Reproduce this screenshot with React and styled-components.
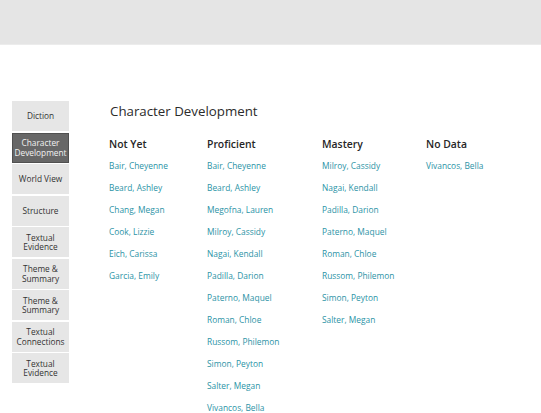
import React from "react";
import styled, { createGlobalStyle } from "styled-components";

const Global = createGlobalStyle`
  html, body { margin: 0; padding: 0; background: #fff; }
  body { font-family: "Open Sans", "Liberation Sans", sans-serif; }
`;

const Header = styled.header`
  height: 44px;
  background: #e5e5e5;
  border-bottom: 1px solid #ececec;
`;

const Body = styled.div`
  display: flex;
  align-items: flex-start;
  padding: 56px 0 0 12px;
`;

const Sidebar = styled.nav`
  display: flex;
  flex-direction: column;
  gap: 1.5px;
  width: 57px;
`;

const NavButton = styled.div`
  box-sizing: border-box;
  height: 30px;
  display: flex;
  align-items: center;
  justify-content: center;
  text-align: center;
  font-size: 8.3px;
  line-height: 9.5px;
  color: ${(p) => (p.$active ? "#f2f2f2" : "#333")};
  background: ${(p) => (p.$active ? "#676767" : "#e6e6e6")};
  border: 1px solid ${(p) => (p.$active ? "#505050" : "#e6e6e6")};
`;

const Main = styled.main`
  margin-left: 40px;
`;

const Title = styled.h1`
  margin: 0 0 0 1px;
  font-size: 13.3px;
  font-weight: 400;
  line-height: 20px;
  color: #2b2b2b;
`;

const Columns = styled.div`
  display: grid;
  grid-template-columns: 98px 115px 104px auto;
  margin-top: 16px;
`;

const Column = styled.div`
  display: flex;
  flex-direction: column;
`;

const ColHead = styled.div`
  font-size: 10.4px;
  font-weight: 600;
  line-height: 14px;
  color: #262626;
  margin-bottom: 4px;
`;

const Name = styled.a`
  font-size: 8.4px;
  line-height: 22px;
  color: #2b93a6;
  text-decoration: none;
  white-space: nowrap;
`;

const nav = [
  ["Diction"],
  ["Character", "Development"],
  ["World View"],
  ["Structure"],
  ["Textual", "Evidence"],
  ["Theme &", "Summary"],
  ["Theme &", "Summary"],
  ["Textual", "Connections"],
  ["Textual", "Evidence"],
];

const columns = [
  {
    title: "Not Yet",
    names: ["Bair, Cheyenne", "Beard, Ashley", "Chang, Megan", "Cook, Lizzie", "Eich, Carissa", "Garcia, Emily"],
  },
  {
    title: "Proficient",
    names: [
      "Bair, Cheyenne",
      "Beard, Ashley",
      "Megofna, Lauren",
      "Milroy, Cassidy",
      "Nagai, Kendall",
      "Padilla, Darion",
      "Paterno, Maquel",
      "Roman, Chloe",
      "Russom, Philemon",
      "Simon, Peyton",
      "Salter, Megan",
      "Vivancos, Bella",
    ],
  },
  {
    title: "Mastery",
    names: [
      "Milroy, Cassidy",
      "Nagai, Kendall",
      "Padilla, Darion",
      "Paterno, Maquel",
      "Roman, Chloe",
      "Russom, Philemon",
      "Simon, Peyton",
      "Salter, Megan",
    ],
  },
  { title: "No Data", names: ["Vivancos, Bella"] },
];

export default function App() {
  return (
    <>
      <Global />
      <Header />
      <Body>
        <Sidebar>
          {nav.map((lines, i) => (
            <NavButton key={i} $active={i === 1}>
              <span>
                {lines.map((l, j) => (
                  <React.Fragment key={j}>
                    {j > 0 && <br />}
                    {l}
                  </React.Fragment>
                ))}
              </span>
            </NavButton>
          ))}
        </Sidebar>
        <Main>
          <Title>Character Development</Title>
          <Columns>
            {columns.map((c) => (
              <Column key={c.title}>
                <ColHead>{c.title}</ColHead>
                {c.names.map((n, i) => (
                  <Name key={i}>{n}</Name>
                ))}
              </Column>
            ))}
          </Columns>
        </Main>
      </Body>
    </>
  );
}
